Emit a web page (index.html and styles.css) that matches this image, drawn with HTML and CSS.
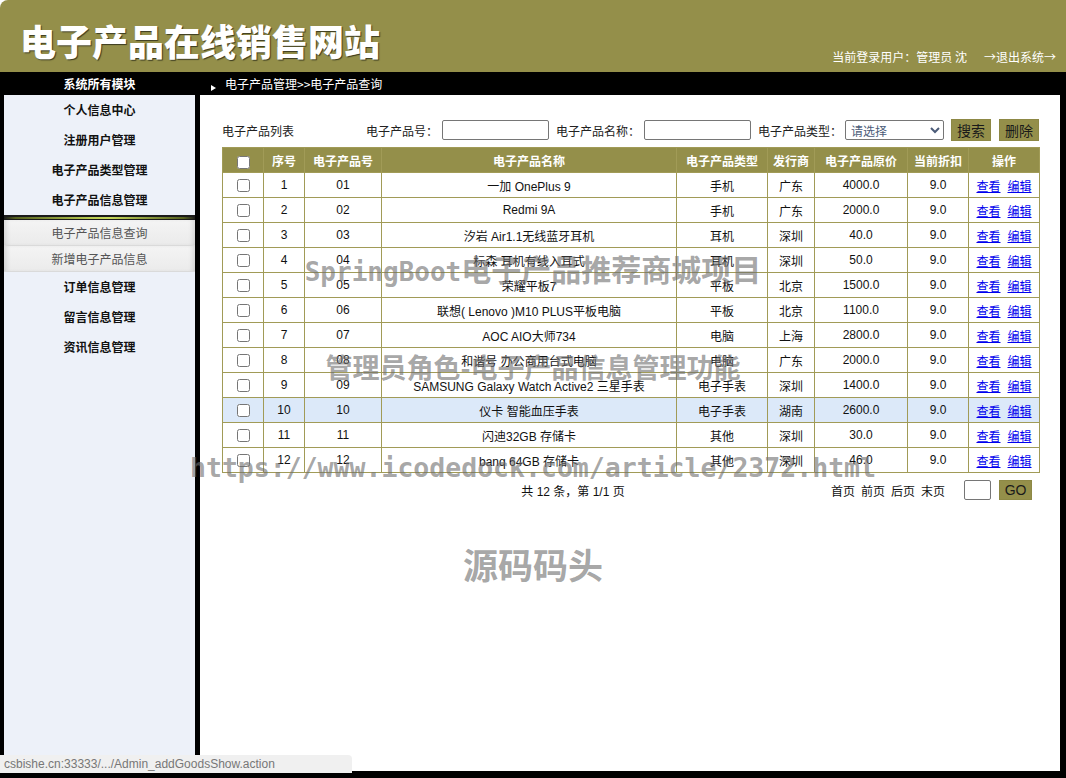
FILE: index.html
```html
<!DOCTYPE html>
<html lang="zh-CN">
<head>
<meta charset="utf-8">
<title>电子产品在线销售网站</title>
<link rel="stylesheet" href="styles.css">
</head>
<body>
<div class="page">
  <header class="header">
    <h1 class="site-title">电子产品在线销售网站</h1>
    <div class="user-info"><span>当前登录用户：管理员 沈</span><a class="logout">→退出系统→</a></div>
  </header>
  <div class="frame">
    <div class="bar-left">系统所有模块</div>
    <div class="bar-right"><span class="tri"></span><span>电子产品管理&gt;&gt;电子产品查询</span></div>
    <nav class="sidebar">
      <div class="nav-item">个人信息中心</div>
      <div class="nav-item">注册用户管理</div>
      <div class="nav-item">电子产品类型管理</div>
      <div class="nav-item">电子产品信息管理</div>
      <div class="nav-sep"></div>
      <div class="sub-item">电子产品信息查询</div>
      <div class="sub-item">新增电子产品信息</div>
      <div class="nav-item">订单信息管理</div>
      <div class="nav-item">留言信息管理</div>
      <div class="nav-item">资讯信息管理</div>
    </nav>
    <main class="content">
      <div class="toolbar">
        <span class="list-title">电子产品列表</span>
        <form class="search">
          <label>电子产品号：</label><input class="field" type="text">
          <label>电子产品名称：</label><input class="field" type="text">
          <label>电子产品类型：</label><select class="type-select"><option>请选择</option></select>
          <button type="button" class="btn">搜索</button>
          <button type="button" class="btn">删除</button>
        </form>
      </div>
      <table class="grid">
        <colgroup>
          <col class="c-chk"><col class="c-idx"><col class="c-no"><col class="c-name"><col class="c-type"><col class="c-pub"><col class="c-price"><col class="c-disc"><col class="c-op">
        </colgroup>
        <thead>
          <tr><th><input type="checkbox"></th><th>序号</th><th>电子产品号</th><th>电子产品名称</th><th>电子产品类型</th><th>发行商</th><th>电子产品原价</th><th>当前折扣</th><th>操作</th></tr>
        </thead>
        <tbody>
          <tr><td><input type="checkbox"></td><td>1</td><td>01</td><td>一加 OnePlus 9</td><td>手机</td><td>广东</td><td>4000.0</td><td>9.0</td><td><a>查看</a><a>编辑</a></td></tr>
          <tr><td><input type="checkbox"></td><td>2</td><td>02</td><td>Redmi 9A</td><td>手机</td><td>广东</td><td>2000.0</td><td>9.0</td><td><a>查看</a><a>编辑</a></td></tr>
          <tr><td><input type="checkbox"></td><td>3</td><td>03</td><td>汐岩 Air1.1无线蓝牙耳机</td><td>耳机</td><td>深圳</td><td>40.0</td><td>9.0</td><td><a>查看</a><a>编辑</a></td></tr>
          <tr><td><input type="checkbox"></td><td>4</td><td>04</td><td>标森 耳机有线入耳式</td><td>耳机</td><td>深圳</td><td>50.0</td><td>9.0</td><td><a>查看</a><a>编辑</a></td></tr>
          <tr><td><input type="checkbox"></td><td>5</td><td>05</td><td>荣耀平板7</td><td>平板</td><td>北京</td><td>1500.0</td><td>9.0</td><td><a>查看</a><a>编辑</a></td></tr>
          <tr><td><input type="checkbox"></td><td>6</td><td>06</td><td>联想( Lenovo )M10 PLUS平板电脑</td><td>平板</td><td>北京</td><td>1100.0</td><td>9.0</td><td><a>查看</a><a>编辑</a></td></tr>
          <tr><td><input type="checkbox"></td><td>7</td><td>07</td><td>AOC AIO大师734</td><td>电脑</td><td>上海</td><td>2800.0</td><td>9.0</td><td><a>查看</a><a>编辑</a></td></tr>
          <tr><td><input type="checkbox"></td><td>8</td><td>08</td><td>和谐号 办公商用台式电脑</td><td>电脑</td><td>广东</td><td>2000.0</td><td>9.0</td><td><a>查看</a><a>编辑</a></td></tr>
          <tr><td><input type="checkbox"></td><td>9</td><td>09</td><td>SAMSUNG Galaxy Watch Active2 三星手表</td><td>电子手表</td><td>深圳</td><td>1400.0</td><td>9.0</td><td><a>查看</a><a>编辑</a></td></tr>
          <tr class="hover"><td><input type="checkbox"></td><td>10</td><td>10</td><td>仪卡 智能血压手表</td><td>电子手表</td><td>湖南</td><td>2600.0</td><td>9.0</td><td><a>查看</a><a>编辑</a></td></tr>
          <tr><td><input type="checkbox"></td><td>11</td><td>11</td><td>闪迪32GB 存储卡</td><td>其他</td><td>深圳</td><td>30.0</td><td>9.0</td><td><a>查看</a><a>编辑</a></td></tr>
          <tr><td><input type="checkbox"></td><td>12</td><td>12</td><td>banq 64GB 存储卡</td><td>其他</td><td>深圳</td><td>46.0</td><td>9.0</td><td><a>查看</a><a>编辑</a></td></tr>
        </tbody>
      </table>
      <div class="pager">
        <span class="pager-info">共 12 条，第 1/1 页</span>
        <span class="pager-links"><a>首页</a><a>前页</a><a>后页</a><a>末页</a></span>
        <input class="page-input" type="text">
        <button type="button" class="btn go">GO</button>
      </div>
    </main>
  </div>
  <div class="watermarks">
    <div class="wm wm1"><span class="mono">SpringBoot</span>电子产品推荐商城项目</div>
    <div class="wm wm2">管理员角色-电子产品信息管理功能</div>
    <div class="wm wm3 mono">https://www.icodedock.com/article/2372.html</div>
    <div class="wm wm4">源码码头</div>
  </div>
  <div class="status">csbishe.cn:33333/.../Admin_addGoodsShow.action</div>
</div>
</body>
</html>
```
FILE: styles.css
```css
* { box-sizing: border-box; }
html, body { margin: 0; padding: 0; }
body {
  width: 1066px;
  height: 778px;
  overflow: hidden;
  background: #fff;
  font-family: "Noto Sans CJK SC", "Liberation Sans", sans-serif;
  font-size: 12px;
  color: #000;
}
.page { position: relative; width: 1066px; height: 778px; }

/* header */
.header {
  height: 72px;
  background: #948f4a;
  border-radius: 8px 0 0 0;
  display: flex;
  justify-content: space-between;
  align-items: flex-start;
  padding: 0 10px 0 20px;
}
.site-title {
  margin: 0;
  padding-top: 22px;
  font-size: 36px;
  line-height: 36px;
  font-weight: 900;
  color: #fff;
  letter-spacing: 0;
  text-shadow: 1px 1px 1px #3a3a20;
}
.user-info {
  margin-top: 49px;
  line-height: 16px;
  color: #fff;
  font-size: 12px;
  display: flex;
  gap: 17px;
}
.logout { color: #fff; }

/* frame */
.frame {
  height: 706px;
  background: #000;
  display: grid;
  grid-template-columns: 191px 860px;
  grid-template-rows: 23px 676px;
  column-gap: 5px;
  padding: 0 6px 7px 4px;
}
.bar-left {
  color: #fff;
  font-weight: 700;
  text-align: center;
  line-height: 23px;
}
.bar-right {
  color: #fff;
  display: flex;
  align-items: center;
  padding-left: 11px;
  line-height: 23px;
}
.tri {
  width: 0; height: 0;
  border-left: 5px solid #fff;
  border-top: 3px solid transparent;
  border-bottom: 3px solid transparent;
  margin: 8px 9px 0 0;
}

/* sidebar */
.sidebar {
  background: #edf1f9;
}
.nav-item {
  height: 30px;
  line-height: 30px;
  text-align: center;
  font-weight: 700;
  color: #111;
}
.nav-sep {
  height: 5px;
  border-top: 2px solid #1b1b1b;
  border-bottom: 1px solid #1b1b1b;
  background: linear-gradient(to right, #1b1b1b 0, #55601f 6%, #b9cc52 45%, #c6d85c 55%, #55601f 94%, #1b1b1b 100%);
}
.sub-item {
  height: 26px;
  line-height: 25px;
  text-align: center;
  color: #555;
  background: linear-gradient(#f4f4f4, #ebebeb);
  border-bottom: 1px solid #dadada;
  box-shadow: inset 5px 0 5px -3px rgba(0,0,0,0.12), inset -5px 0 5px -3px rgba(0,0,0,0.12);
}

/* content */
.content {
  background: #fff;
  padding: 24px 21px 0 22px;
}
.toolbar {
  height: 22px;
  display: flex;
  justify-content: space-between;
  align-items: center;
}
.list-title { color: #222; }
.search {
  display: flex;
  align-items: center;
  margin: 0;
}
.search label { color: #222; }
.field {
  width: 107px;
  height: 20px;
  margin: 0 7px 0 4px;
  border: 1px solid #767676;
  border-radius: 2px;
  padding: 0 3px;
}
.type-select {
  width: 99px;
  height: 20px;
  margin: 0 7px 0 3px;
  font-size: 12px;
  font-family: "Noto Sans CJK SC", sans-serif;
  color: #4b5b78;
  border: 1px solid #767676;
  border-radius: 2px;
  background: #fff;
  padding: 0 1px;
}
.btn {
  height: 22px;
  padding: 0 5px;
  background: #948f4a;
  border: 1px solid #8d8845;
  color: #1a1a1a;
  font-family: "Noto Sans CJK SC", sans-serif;
  font-size: 14px;
  line-height: 18px;
}
.search .btn + .btn { margin-left: 8px; }

/* table */
.grid {
  width: 817px;
  margin-top: 6px;
  border-collapse: collapse;
  table-layout: fixed;
  font-family: "Liberation Sans", "Noto Sans CJK SC", sans-serif;
  font-size: 12px;
}
.c-chk { width: 41px; }
.c-idx { width: 41px; }
.c-no { width: 77px; }
.c-name { width: 295px; }
.c-type { width: 91px; }
.c-pub { width: 47px; }
.c-price { width: 93px; }
.c-disc { width: 61px; }
.c-op { width: 71px; }
.grid th, .grid td {
  border: 1px solid #a19b57;
  text-align: center;
  padding: 0;
  height: 25px;
  white-space: nowrap;
  overflow: hidden;
}
.grid th {
  background: #948f4a;
  color: #fff;
  font-weight: 700;
  font-family: "Noto Sans CJK SC", sans-serif;
}
.grid td { color: #111; }
.grid input[type=checkbox] {
  margin: 0;
  width: 13px;
  height: 13px;
  vertical-align: middle;
}
.grid tr.hover td { background: #dce9f9; }
.grid a {
  color: #0000ee;
  text-decoration: underline;
  font-family: "Noto Sans CJK SC", sans-serif;
}
.grid a + a { margin-left: 7px; }

/* pager */
.pager {
  margin-top: 7px;
  height: 20px;
  display: flex;
  align-items: center;
}
.pager-info {
  width: 500px;
  margin-left: 101px;
  text-align: center;
  color: #111;
  font-family: "Liberation Sans", "Noto Sans CJK SC", sans-serif;
}
.pager-links { margin-left: 8px; display: flex; gap: 6px; color: #111; }
.page-input {
  width: 27px;
  height: 20px;
  margin-left: 19px;
  border: 1px solid #767676;
  border-radius: 2px;
}
.btn.go {
  margin-left: 8px;
  width: 33px;
  height: 20px;
  padding: 0;
  font-family: "Liberation Sans", sans-serif;
}

/* watermarks */
.watermarks {
  position: absolute;
  left: 0; top: 0;
  width: 1066px;
  height: 778px;
  pointer-events: none;
}
.wm {
  position: absolute;
  left: 0;
  width: 1066px;
  text-align: center;
  color: rgba(110,110,110,0.62);
  font-weight: 700;
  font-family: "Noto Sans CJK SC", sans-serif;
  white-space: nowrap;
}
.mono { font-family: "DejaVu Sans Mono", "Liberation Mono", monospace; }
.wm1 { top: 251px; font-size: 30px; line-height: 34px; }
.wm1 .mono { font-size: 26px; }
.wm2 { top: 350px; font-size: 27px; line-height: 34px; }
.wm3 { top: 451px; font-size: 26.5px; line-height: 34px; font-weight: 700; }
.wm4 { top: 543px; font-size: 35px; line-height: 42px; }

/* status bar */
.status {
  position: absolute;
  left: 0;
  top: 755px;
  width: 352px;
  height: 18px;
  background: #f0f0f0;
  border-top-right-radius: 4px;
  color: #777;
  font-family: "Liberation Sans", sans-serif;
  font-size: 12px;
  line-height: 18px;
  padding-left: 4px;
}
```
